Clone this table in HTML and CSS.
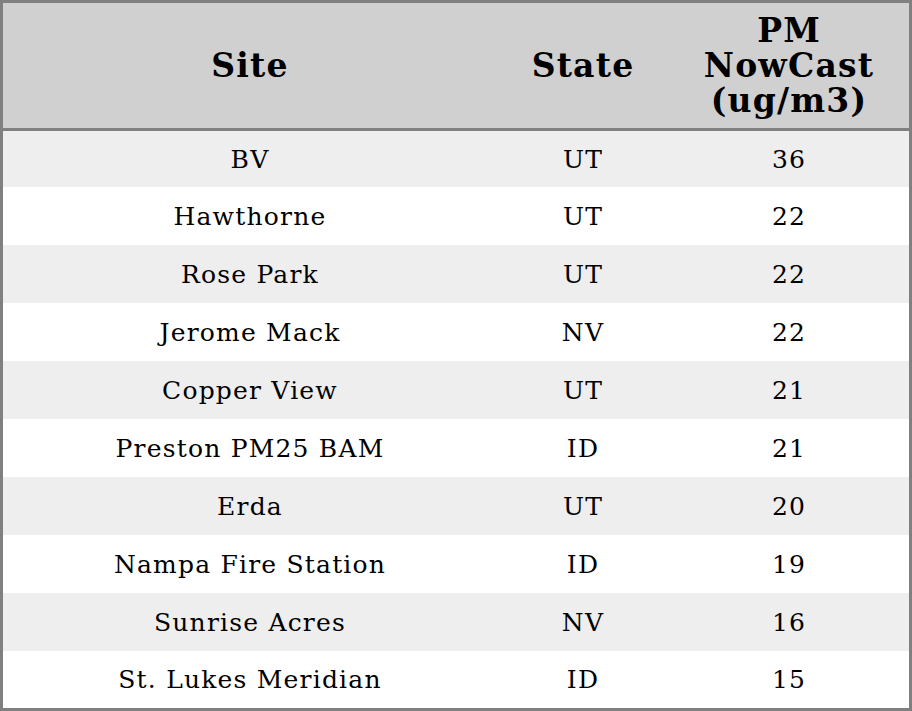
FILE: index.html
```html
<!DOCTYPE html>
<html>
<head>
<meta charset="utf-8">
<link rel="stylesheet" href="styles.css">
</head>
<body>
<table class="data">
  <colgroup>
    <col class="c-site">
    <col class="c-state">
    <col class="c-pm">
  </colgroup>
  <thead>
    <tr><th>Site</th><th>State</th><th>PM<br>NowCast<br>(ug/m3)</th></tr>
  </thead>
  <tbody>
    <tr class="first"><td>BV</td><td>UT</td><td>36</td></tr>
    <tr><td>Hawthorne</td><td>UT</td><td>22</td></tr>
    <tr><td>Rose Park</td><td>UT</td><td>22</td></tr>
    <tr><td>Jerome Mack</td><td>NV</td><td>22</td></tr>
    <tr><td>Copper View</td><td>UT</td><td>21</td></tr>
    <tr><td>Preston PM25 BAM</td><td>ID</td><td>21</td></tr>
    <tr><td>Erda</td><td>UT</td><td>20</td></tr>
    <tr><td>Nampa Fire Station</td><td>ID</td><td>19</td></tr>
    <tr><td>Sunrise Acres</td><td>NV</td><td>16</td></tr>
    <tr class="last"><td>St. Lukes Meridian</td><td>ID</td><td>15</td></tr>
  </tbody>
</table>
</body>
</html>
```
FILE: styles.css
```css
html, body {
  margin: 0;
  padding: 0;
  background: #ffffff;
}
.data {
  width: 912px;
  border-collapse: separate;
  border-spacing: 0;
  border: 3px solid #808080;
  font-family: "DejaVu Serif", serif;
  color: #000;
  table-layout: fixed;
}
.c-site { width: 494px; }
.c-state { width: 172px; }
.c-pm { width: 240px; }
.data th {
  height: 125px;
  box-sizing: content-box;
  background: #d0d0d0;
  border-bottom: 3px solid #808080;
  font-size: 33px;
  line-height: 35px;
  letter-spacing: 1.2px;
  font-weight: bold;
  text-align: center;
  vertical-align: middle;
  padding: 0;
}
.data td {
  font-size: 25px;
  letter-spacing: 1.2px;
  text-align: center;
  vertical-align: middle;
  padding: 0;
  height: 58px;
}
.data tr.first td { height: 56px; }
.data tr.last td { height: 57px; }
.data tbody tr:nth-child(odd) { background: #eeeeee; }
.data tbody tr:nth-child(even) { background: #ffffff; }
```
